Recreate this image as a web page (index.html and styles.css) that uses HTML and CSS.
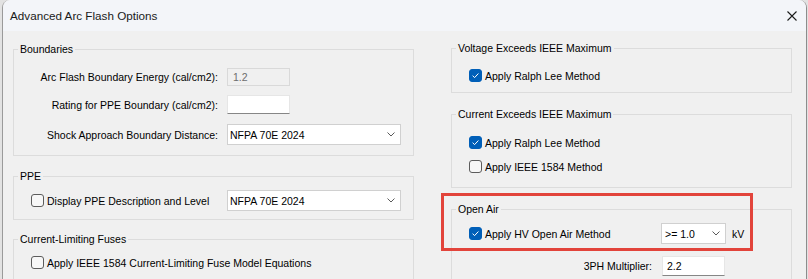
FILE: index.html
```html
<!DOCTYPE html>
<html lang="en">
<head>
  <meta charset="UTF-8">
  <title>Advanced Arc Flash Options</title>
  <link rel="stylesheet" href="styles.css">
</head>
<body>

  <div class="window">
    <div class="titlebar">
      <span class="title">Advanced Arc Flash Options</span>
      <svg class="close" width="10" height="10" viewBox="0 0 10 10">
        <path d="M0.5 0.5 L9.5 9.5 M9.5 0.5 L0.5 9.5" stroke="#1b1b1b" stroke-width="1.1" fill="none"/>
      </svg>
    </div>

    <div class="content">
      <!-- kolom kiri -->
      <div class="col col-left">
        <fieldset class="group boundaries">
          <legend>Boundaries</legend>
          <div class="form-row row-energy">
            <span class="caption">Arc Flash Boundary Energy (cal/cm2):</span>
            <div class="text-box disabled">1.2</div>
          </div>
          <div class="form-row row-rating">
            <span class="caption">Rating for PPE Boundary (cal/cm2):</span>
            <div class="text-box"></div>
          </div>
          <div class="form-row row-shock">
            <span class="caption">Shock Approach Boundary Distance:</span>
            <div class="combo wide"><span>NFPA 70E 2024</span><svg class="chevron" width="8" height="5" viewBox="0 0 8 5"><path d="M0.5 0.5 L4 4 L7.5 0.5" stroke="#5a5a5a" fill="none"/></svg></div>
          </div>
        </fieldset>

        <fieldset class="group ppe">
          <legend>PPE</legend>
          <div class="form-row row-ppe">
            <label class="check-label ppe-check"><span class="check"></span>Display PPE Description and Level</label>
            <div class="combo wide"><span>NFPA 70E 2024</span><svg class="chevron" width="8" height="5" viewBox="0 0 8 5"><path d="M0.5 0.5 L4 4 L7.5 0.5" stroke="#5a5a5a" fill="none"/></svg></div>
          </div>
        </fieldset>

        <fieldset class="group fuses">
          <legend>Current-Limiting Fuses</legend>
          <div class="form-row row-fuse">
            <label class="check-label"><span class="check"></span>Apply IEEE 1584 Current-Limiting Fuse Model Equations</label>
          </div>
        </fieldset>
      </div>

      <!-- kolom kanan -->
      <div class="col col-right">
        <fieldset class="group voltage">
          <legend>Voltage Exceeds IEEE Maximum</legend>
          <div class="form-row row-volt">
            <label class="check-label"><span class="check checked"><svg width="11" height="11" viewBox="0 0 11 11"><path d="M2.6 5.7 L4.6 7.6 L8.4 3.5" stroke="#fff" stroke-width="1" fill="none"/></svg></span>Apply Ralph Lee Method</label>
          </div>
        </fieldset>

        <fieldset class="group current">
          <legend>Current Exceeds IEEE Maximum</legend>
          <div class="form-row row-cur1">
            <label class="check-label"><span class="check checked"><svg width="11" height="11" viewBox="0 0 11 11"><path d="M2.6 5.7 L4.6 7.6 L8.4 3.5" stroke="#fff" stroke-width="1" fill="none"/></svg></span>Apply Ralph Lee Method</label>
          </div>
          <div class="form-row row-cur2">
            <label class="check-label"><span class="check"></span>Apply IEEE 1584 Method</label>
          </div>
        </fieldset>

        <fieldset class="group open-air">
          <legend>Open Air</legend>
          <div class="form-row row-air">
            <label class="check-label air-check"><span class="check checked"><svg width="11" height="11" viewBox="0 0 11 11"><path d="M2.6 5.7 L4.6 7.6 L8.4 3.5" stroke="#fff" stroke-width="1" fill="none"/></svg></span>Apply HV Open Air Method</label>
            <div class="combo small"><span>&gt;= 1.0</span><svg class="chevron" width="8" height="5" viewBox="0 0 8 5"><path d="M0.5 0.5 L4 4 L7.5 0.5" stroke="#5a5a5a" fill="none"/></svg></div>
            <span class="unit">kV</span>
          </div>
          <div class="form-row row-mult">
            <span class="caption mult-caption">3PH Multiplier:</span>
            <div class="text-box mult">2.2</div>
          </div>
        </fieldset>
      </div>
    </div>

    <div class="highlight"></div>
  </div>

</body>
</html>
```

FILE: styles.css
```css
* {
  box-sizing: border-box;
}

body {
  margin: 0;
  background-color: #e2e2e2;
  font-family: "Liberation Sans", Arial, sans-serif;
  font-size: 10.5px;
  color: #000;
  overflow: hidden;
}

.window {
  position: relative;
  margin-left: 2px;
  width: 805px;
  height: 279px;
  background-color: #f0f0f0;
  border-left: 1px solid #9a9a9a;
  border-right: 1px solid #8c8c8c;
  border-top-left-radius: 8px;
  border-top-right-radius: 8px;
  overflow: hidden;
  white-space: nowrap;
}

.titlebar {
  height: 31px;
  background-color: #f3f5f9;
  display: flex;
  align-items: center;
  justify-content: space-between;
  padding: 0 9px 0 7px;
}

.title {
  font-size: 11.7px;
  color: #1a1a1a;
}

.content {
  display: flex;
  gap: 37px;
  padding: 10px 0 0 10px;
}

.col-left {
  width: 401px;
}

.col-right {
  width: 341px;
  margin-top: -1px;
}

.group {
  margin: 0;
  min-width: 0;
  border: 1px solid #dcdcdc;
  padding: 0 0 10px 4px;
}

.group legend {
  padding: 0 2px;
  line-height: 16px;
}

.form-row {
  display: flex;
  align-items: center;
  height: 21px;
}

.caption {
  width: 200px;
  text-align: right;
  margin-right: 9px;
}

.text-box {
  width: 63px;
  height: 19px;
  background-color: #fff;
  border: 1px solid #e6e6e6;
  border-bottom-color: #868686;
  padding: 0 5px;
  line-height: 17px;
}

.text-box.disabled {
  height: 18px;
  background-color: #f0f0f0;
  border-color: #d9d9d9;
  color: #6d6d6d;
  line-height: 16px;
}

.combo {
  height: 21px;
  background-color: #fff;
  border: 1px solid #d0d0d0;
  display: flex;
  align-items: center;
  justify-content: space-between;
  padding: 0 5px 0 2px;
}

.combo.wide {
  width: 174px;
}

.combo.small {
  width: 65px;
  padding-left: 3px;
}

.check-label {
  display: flex;
  align-items: center;
  padding-left: 13px;
}

.check {
  width: 13px;
  height: 13px;
  border: 1px solid #5c5c5c;
  border-radius: 3px;
  background-color: #f7f7f7;
  margin-right: 3px;
  display: flex;
  align-items: center;
  justify-content: center;
}

.check.checked {
  background-color: #005fb8;
  border-color: #005fb8;
}

/* baris di grup Boundaries */
.row-energy {
  height: 18px;
  margin-top: 11px;
}

.row-rating {
  height: 19px;
  margin-top: 9px;
}

.row-shock {
  margin-top: 10px;
}

.ppe {
  margin-top: 12px;
  padding-bottom: 8px;
}

.row-ppe {
  margin-top: 6px;
}

.ppe-check {
  width: 209px;
}

.fuses {
  margin-top: 11px;
}

.row-fuse {
  margin-top: 5px;
}

/* kolom kanan */
.voltage {
  padding-bottom: 6px;
}

.row-volt {
  margin-top: 9px;
}

.current {
  margin-top: 13px;
}

.row-cur1 {
  margin-top: 10px;
}

.row-cur2 {
  margin-top: 3px;
}

.open-air {
  margin-top: 13px;
}

.row-air {
  margin-top: 6px;
}

.air-check {
  width: 205px;
}

.unit {
  margin-left: 6px;
}

.row-mult {
  margin-top: 12px;
  height: 20px;
}

.mult-caption {
  width: 196px;
  margin-right: 10px;
}

.text-box.mult {
  height: 20px;
  padding-left: 4px;
  line-height: 18px;
}

.highlight {
  position: absolute;
  left: 438px;
  top: 193px;
  width: 312px;
  height: 58px;
  border: 3px solid #e2443b;
}
```
